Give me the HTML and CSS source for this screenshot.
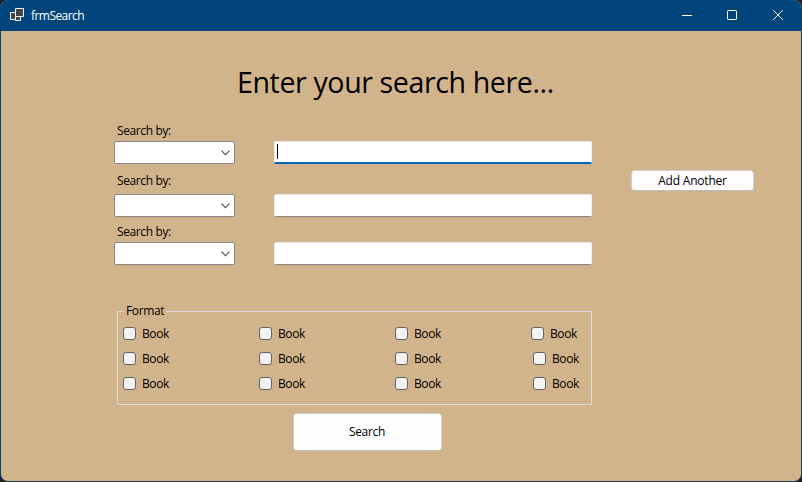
FILE: index.html
```
<!DOCTYPE html>
<html lang="en">
<head>
<meta charset="utf-8">
<title>frmSearch</title>
<link rel="stylesheet" href="styles.css">
</head>
<body>
<div class="window">
  <header class="titlebar">
    <svg class="app-icon" width="16" height="16" viewBox="0 0 16 16" fill="#444" stroke="#f2f2f2"><path d="M1.5 4.5h5v7h-5z"/><path d="M6.5 8.5h5v4h-5z"/><path d="M6.500 .5h8v8h-8z"/></svg>
    <span class="title">frmSearch</span>
    <div class="controls">
      <svg width="46" height="31" viewBox="0 0 46 31"><path d="M19 15.500h10"/></svg>
      <svg width="46" height="31" viewBox="0 0 46 31"><rect x="18.500" y="10.500" width="9" height="9" rx=".7"/></svg>
      <svg width="46" height="31" viewBox="0 0 46 31"><path d="M18.200 10.200l9.600 9.600m0-9.600l-9.600 9.600"/></svg>
    </div>
  </header>
  <main class="client">
    <h1>Enter your search here...</h1>
    <div class="query">
      <div class="rows">
        <div class="row">
          <span class="label">Search by:</span>
          <div class="fields"><div class="combo"><svg width="9" height="6" viewBox="0 0 9 6"><path d="M.5 .7l4 4 4-4"/></svg></div><div class="textbox focused"><i class="caret"></i></div></div>
        </div>
        <div class="row second">
          <span class="label">Search by:</span>
          <div class="fields"><div class="combo"><svg width="9" height="6" viewBox="0 0 9 6"><path d="M.5 .7l4 4 4-4"/></svg></div><div class="textbox"></div></div>
        </div>
        <div class="row third">
          <span class="label">Search by:</span>
          <div class="fields"><div class="combo"><svg width="9" height="6" viewBox="0 0 9 6"><path d="M.5 .7l4 4 4-4"/></svg></div><div class="textbox"></div></div>
        </div>
      </div>
      <button class="button add"><span class="add-text">Add Another</span></button>
    </div>
    <fieldset class="group">
      <legend><span>Format</span></legend>
      <div class="checks">
        <label class="check"><i></i><span>Book</span></label><label class="check"><i></i><span>Book</span></label><label class="check"><i></i><span>Book</span></label><label class="check"><i></i><span>Book</span></label>
        <label class="check"><i></i><span>Book</span></label><label class="check"><i></i><span>Book</span></label><label class="check"><i></i><span>Book</span></label><label class="check inset"><i></i><span>Book</span></label>
        <label class="check"><i></i><span>Book</span></label><label class="check"><i></i><span>Book</span></label><label class="check"><i></i><span>Book</span></label><label class="check inset"><i></i><span>Book</span></label>
      </div>
    </fieldset>
    <button class="button search"><span>Search</span></button>
  </main>
</div>
</body>
</html>
```
FILE: styles.css
```
* { box-sizing: border-box; }
body {
  margin: 0;
  background: #202020;
  color: #000;
  font: 12px/16px "Open Sans", "Noto Sans", sans-serif;
  letter-spacing: -0.38px;
}
.window {
  width: 802px;
  height: 482px;
  border: 1px solid #00457c;
  border-top: 0;
  border-bottom-color: #123f5c;
  border-right-color: #123f5c;
  border-radius: 8px;
  overflow: hidden;
  background: #d2b48c;
}
.titlebar {
  display: flex;
  align-items: center;
  height: 31px;
  padding-left: 8px;
  background: #00457c;
  color: #fff;
}
.app-icon { margin-top: 1px; }
.title { margin-left: 6px; letter-spacing: -0.55px; }
.controls { display: flex; margin-left: auto; }
.controls svg { fill: none; stroke: #fff; stroke-width: 1; }
.client { height: 450px; }
h1 {
  width: max-content;
  margin: 0 0 0 236px;
  padding-top: 31px;
  font-size: 30px;
  font-weight: 400;
  line-height: 40px;
  letter-spacing: -0.4px;
  white-space: nowrap;
  transform: scaleX(0.952);
  transform-origin: left;
}
.query { display: flex; height: 163px; padding: 21px 0 0 113px; }
.rows { width: 478px; }
.row { height: 41px; }
.second { margin-top: 9px; }
.third { margin-top: 10px; }
.label { display: block; height: 18px; padding-left: 3px; }
.fields { display: flex; gap: 39px; }
.second .fields { margin-top: 3px; }
.combo {
  display: flex;
  align-items: center;
  justify-content: flex-end;
  width: 121px;
  height: 23px;
  padding-right: 4px;
  border: 1px solid #868686;
  border-radius: 2px;
  background: #fff;
}
.combo svg { fill: none; stroke: #505050; stroke-width: 1.1; }
.textbox {
  width: 318px;
  height: 23px;
  border: 1px solid #ececec;
  border-bottom-color: #868686;
  border-radius: 2px;
  background: #fff;
}
.focused { border-bottom: 2px solid #0067c0; border-radius: 2px 2px 0 0; }
.caret { display: block; width: 1px; height: 15px; margin: 2px 0 0 2px; background: #000; }
.button {
  display: flex;
  align-items: center;
  justify-content: center;
  padding: 0;
  border: 1px solid #d0d0d0;
  border-bottom-color: #bcbcbc;
  border-radius: 4px;
  background: #fdfdfd;
  color: #000;
  font: inherit;
  letter-spacing: inherit;
}
.add { width: 123px; height: 21px; margin: 47px 0 0 39px; letter-spacing: -0.2px; }
.group {
  position: relative;
  width: 475px;
  min-width: 0;
  height: 94px;
  margin: 46px 0 0 116px;
  padding: 0;
  border: 1px solid #dcdcdc;
}
legend {
  position: absolute;
  top: -9px;
  left: 6px;
  width: 42px;
  padding: 0 0 0 2px;
  background: #d2b48c;
}
.checks {
  display: grid;
  grid-template-columns: 136px 136px 136px 56px;
  grid-auto-rows: 25px;
  padding: 9px 0 0 5px;
}
.check { display: flex; align-items: center; }
.check i { width: 13px; height: 13px; margin-right: 6px; border: 1px solid #626262; border-radius: 3px; background: #f3f3f3; }
.inset { padding-left: 2px; }
.search { width: 149px; height: 38px; margin: 8px 0 0 292px; padding-right: 1px; letter-spacing: -0.3px; }
```
